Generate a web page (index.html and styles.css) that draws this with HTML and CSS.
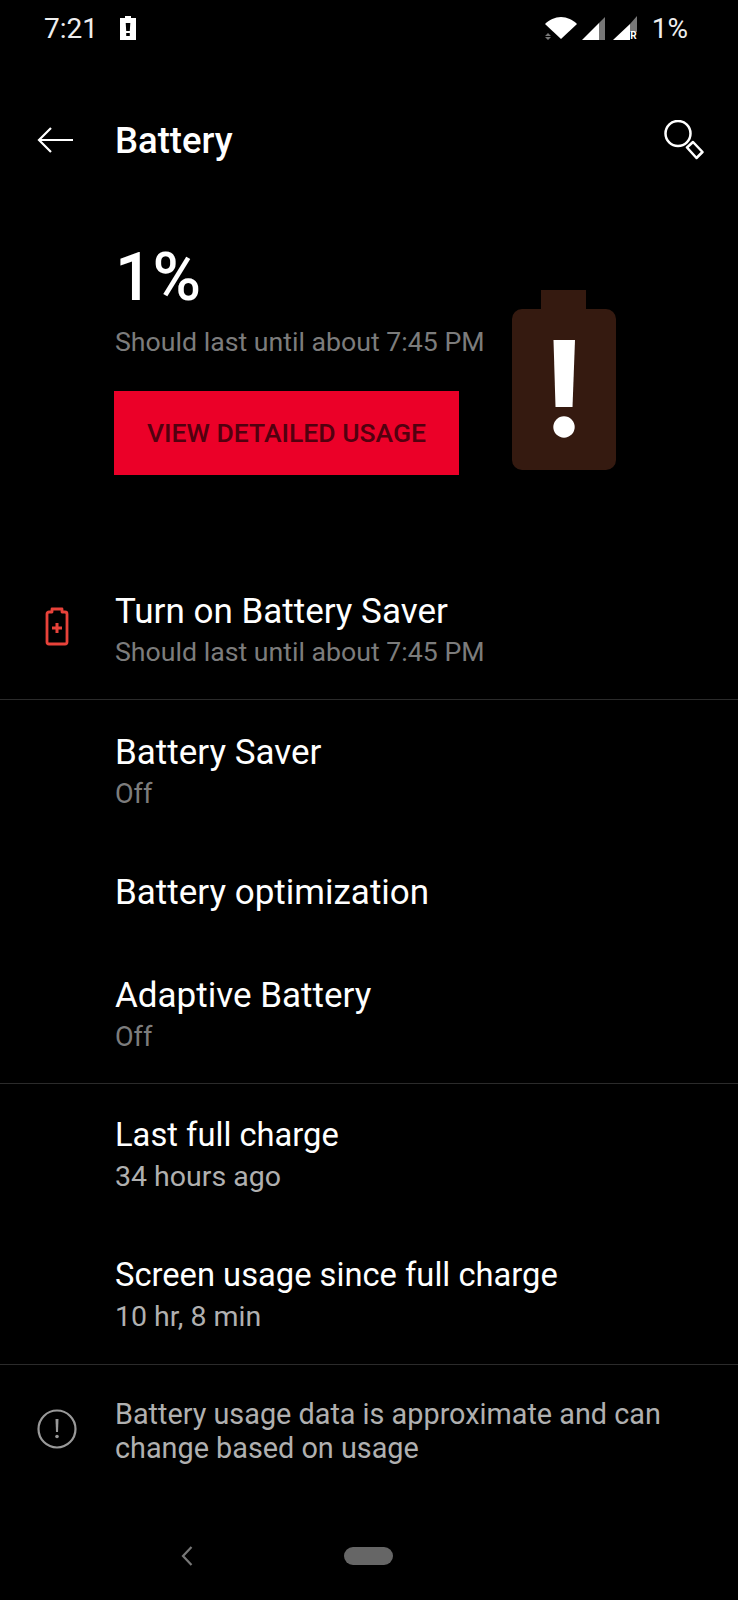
FILE: index.html
```html
<!DOCTYPE html>
<html lang="en">

<head>
    <meta charset="UTF-8">
    <title>Battery</title>
    <link rel="stylesheet" href="styles.css">
</head>

<body>
    <div class="status-bar">
        <span class="clock">7:21</span>
        <svg class="status-battery" width="16" height="24" viewBox="0 0 16 24">
            <path fill="#fff" fill-rule="evenodd" d="M5 0h6v2h5v22H0V2h5zM5.700 7l.5 8h3.600l.5-8zm.5 10v3h3.600v-3z" />
        </svg>
        <span class="status-right">
            <svg class="wifi" width="32" height="23" viewBox="0 0 32 23">
                <path fill="#fff" d="M0 7C4 3 10 0 16 0s12 3 16 7L16 22z" />
                <path fill="#777" d="M0 19h6l-3-3zM0 20h6l-3 3z" />
            </svg>
            <svg class="signal" width="23" height="23" viewBox="0 0 23 23">
                <path fill="#fff" d="M0 23 17 6v17z" />
                <path fill="#777" d="M17 6l6-6v23h-6z" />
            </svg>
            <span class="signal-roam">
                <svg width="24" height="24" viewBox="0 0 24 24">
                    <path fill="#fff" d="M0 24 17 8v16z" />
                    <path fill="#777" d="M17 8l7-8v16h-7z" />
                </svg>
                <span class="roaming">R</span>
            </span>
            <span class="clock">1%</span>
        </span>
    </div>

    <div class="toolbar">
        <svg class="back" width="38" height="28" viewBox="0 0 38 28">
            <path fill="none" stroke="#fff" stroke-width="2.200" d="M37 14H3M15 2 3 14l12 12" />
        </svg>
        <h1 class="title">Battery</h1>
        <svg class="search" width="40" height="40" viewBox="0 0 40 40">
            <circle cx="14" cy="13.500" r="12.500" fill="none" stroke="#fff" stroke-width="2.500" />
            <path fill="none" stroke="#fff" stroke-width="2.500" stroke-linejoin="round" d="M23 27.500l6-5.500 9.500 10-6 6z" />
        </svg>
    </div>

    <div class="hero">
        <div class="hero-text">
            <div class="percent">1%</div>
            <div class="sub">Should last until about 7:45 PM</div>
            <div class="button">VIEW DETAILED USAGE</div>
        </div>
        <svg class="hero-battery" width="104" height="180" viewBox="0 0 104 180">
            <path fill="#351a10" d="M29 0h45v19h20a10 10 0 0 1 10 10v141a10 10 0 0 1-10 10H10a10 10 0 0 1-10-10V29a10 10 0 0 1 10-10h19z" />
            <path fill="#fff" d="M41.500 50H63l-2.500 67h-17z" />
            <circle cx="52" cy="137" r="10.700" fill="#fff" />
        </svg>
    </div>

    <div class="section saver-section">
        <div class="row">
            <svg class="row-icon" width="24" height="39" viewBox="0 0 24 39">
                <path fill="none" stroke="#e8423a" stroke-width="2.800" stroke-linejoin="round" d="M7 5V2h10v3h3a2 2 0 0 1 2 2v28a2 2 0 0 1-2 2H4a2 2 0 0 1-2-2V7a2 2 0 0 1 2-2z" />
                <path fill="none" stroke="#e8423a" stroke-width="3" d="M7 21h10M12 16v10" />
            </svg>
            <div class="row-name">Turn on Battery Saver</div>
            <div class="sub">Should last until about 7:45 PM</div>
        </div>
    </div>

    <div class="section settings-section">
        <div class="row">
            <div class="row-name">Battery Saver</div>
            <div class="sub off">Off</div>
        </div>
        <div class="row one-line">
            <div class="row-name">Battery optimization</div>
        </div>
        <div class="row">
            <div class="row-name">Adaptive Battery</div>
            <div class="sub off">Off</div>
        </div>
    </div>

    <div class="section charge-section">
        <div class="row">
            <div class="row-name">Last full charge</div>
            <div class="sub light">34 hours ago</div>
        </div>
        <div class="row">
            <div class="row-name">Screen usage since full charge</div>
            <div class="sub light">10 hr, 8 min</div>
        </div>
    </div>

    <div class="note">
        <svg class="note-icon" width="40" height="40" viewBox="0 0 40 40">
            <circle cx="20" cy="20" r="18.500" fill="none" stroke="#999" stroke-width="2.200" />
            <path fill="#999" d="M18.500 10h3l-.5 13h-2z" />
            <circle cx="20" cy="27.500" r="1.800" fill="#999" />
        </svg>
        <div class="note-text">Battery usage data is approximate and can change based on usage</div>
    </div>

    <div class="nav-bar">
        <svg class="nav-back" width="12" height="20" viewBox="0 0 12 20">
            <path fill="none" stroke="#777" stroke-width="2.200" d="M10.500 1 2 10l8.500 9" />
        </svg>
        <div class="nav-pill"></div>
    </div>
</body>

</html>
```

FILE: styles.css
```css
* {
    box-sizing: border-box;
}

body {
    margin: 0;
    width: 738px;
    height: 1600px;
    overflow: hidden;
    background-color: #000;
    color: #fff;
    font-family: Roboto, "Liberation Sans", sans-serif;
}

.status-bar {
    display: flex;
    align-items: center;
    height: 56px;
    padding: 0 50px 0 44px;
}

.clock {
    font-size: 28px;
    color: #eee;
}

.status-battery {
    margin-left: 22px;
}

.status-right {
    display: flex;
    align-items: center;
    margin-left: auto;
}

.signal {
    margin-left: 5px;
}

.signal-roam {
    position: relative;
    display: flex;
    margin: 0 15px 0 8px;
}

.roaming {
    position: absolute;
    right: 0;
    bottom: 0;
    font-size: 10px;
    font-weight: 700;
    line-height: 8px;
}

.toolbar {
    display: flex;
    align-items: center;
    height: 56px;
    margin-top: 56px;
    padding: 0 34px 0 36px;
}

.title {
    margin: 0 0 0 41px;
    font-size: 36.500px;
    font-weight: 500;
}

.search {
    margin-left: auto;
}

.hero {
    display: flex;
    padding-left: 115px;
    margin-top: 70px;
}

.percent {
    font-size: 66px;
    font-weight: 500;
    line-height: 80px;
}

.sub {
    font-size: 26.700px;
    line-height: 36px;
    color: #7c7c7c;
    margin-top: 6px;
}

.button {
    width: 345px;
    height: 84px;
    margin: 31px 0 0 -1px;
    background-color: #eb0028;
    color: #52000f;
    font-size: 26.500px;
    font-weight: 500;
    line-height: 84px;
    text-align: center;
}

.hero-battery {
    margin: 52px 0 0 27px;
}

.section {
    border-bottom: 1px solid #2b2b2b;
}

.saver-section {
    margin-top: 84px;
}

.row {
    position: relative;
    height: 140px;
    padding: 31px 0 0 115px;
}

.saver-section .row,
.settings-section .row {
    padding-top: 32px;
}

.one-line {
    height: 103px;
}

.row-name {
    font-size: 35px;
    line-height: 41px;
}

.charge-section .row-name {
    font-size: 32.700px;
}

.row .sub {
    margin-top: 0;
    line-height: 41px;
}

.row .sub.off {
    font-size: 27px;
    line-height: 42px;
}

.sub.light {
    font-size: 28.500px;
    color: #b0b0b0;
}

.row-icon {
    position: absolute;
    left: 45px;
    top: 48px;
}

.note {
    display: flex;
    padding: 32px 70px 0 37px;
}

.note-icon {
    flex-shrink: 0;
    margin: 12px 38px 0 0;
}

.note-text {
    font-size: 28.800px;
    line-height: 34px;
    color: #b0b0b0;
}

.nav-bar {
    display: flex;
    align-items: center;
    margin-top: 81px;
    padding-left: 181px;
}

.nav-pill {
    width: 49px;
    height: 18px;
    margin-left: 151px;
    border-radius: 9px;
    background-color: #666;
}
```
